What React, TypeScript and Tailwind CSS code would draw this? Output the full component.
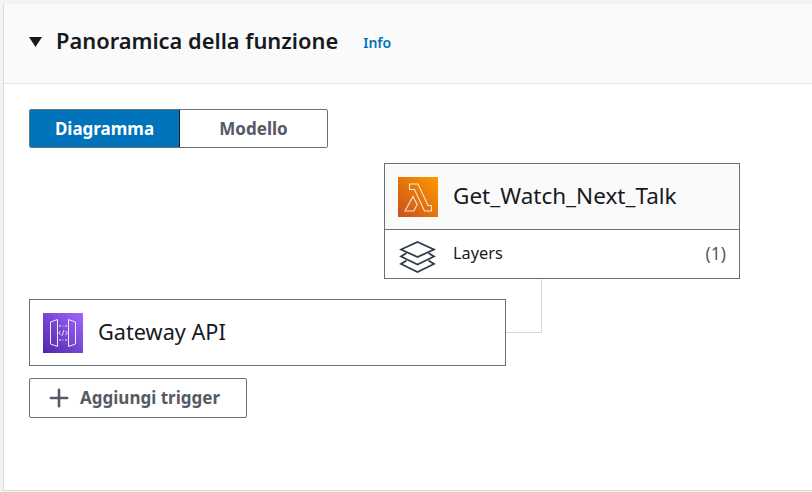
import React from "react";
import { Plus } from "lucide-react";

const LambdaIcon = () => (
    <svg width="40" height="40" viewBox="0 0 40 40" className="block shrink-0">
        <defs>
            <linearGradient id="lambdaBg" x1="0" y1="1" x2="1" y2="0">
                <stop offset="0" stopColor="#c8511b" />
                <stop offset="1" stopColor="#ff9900" />
            </linearGradient>
        </defs>
        <rect width="40" height="40" fill="url(#lambdaBg)" />
        <path d="M11.500 7h8.500l10 21.500h3.500V34h-7L16.500 12.500h-5zM15 19.500l4.200 8-3.400 6.500H7z" fill="none" stroke="#fff" strokeWidth="1.100" opacity="0.8" />
    </svg>
);

const ApiIcon = () => (
    <svg width="40" height="40" viewBox="0 0 40 40" className="block shrink-0">
        <defs>
            <linearGradient id="apiBg" x1="0" y1="1" x2="1" y2="0">
                <stop offset="0" stopColor="#4d27a8" />
                <stop offset="1" stopColor="#a166ff" />
            </linearGradient>
        </defs>
        <rect width="40" height="40" fill="url(#apiBg)" />
        <g fill="none" stroke="#fff" opacity="0.9">
            <path d="M14.500 6.500v27L7.500 31V9zM25.500 6.500v27l7-2.500V9z" strokeWidth="1" />
            <path d="M16 13h2M19.500 13h1M22 13h2M16 27h2M19.500 27h1M22 27h2" strokeWidth="1" />
            <path d="M17.500 18l-1.800 2 1.800 2M22.500 18l1.800 2-1.800 2M21 17l-2 6" strokeWidth="0.900" />
        </g>
    </svg>
);

const LayersIcon = () => (
    <svg width="38" height="34" viewBox="0 0 38 34" className="block shrink-0 mt-[6px]">
        <g fill="none" stroke="#2f3b4c" strokeWidth="1.800" strokeLinejoin="miter">
            <path d="M18.500 2 35 9.500 18.500 17 2 9.500z" />
            <path d="M7.500 13 2 16.500 18.500 24.500 35 16.500 29.500 13" />
            <path d="M7.500 20.500 2 24 18.500 32 35 24 29.500 20.500" />
        </g>
    </svg>
);

const App = () => {
    return (
        <div className="w-[812px] h-[492px] overflow-hidden bg-[#f2f3f3] pt-[4px] pl-[3px] font-['Noto_Sans','Open_Sans',sans-serif]">
            <div className="h-[487px] bg-white border-l border-b border-[#d5dbdb] flex flex-col">
                <div className="h-[80px] shrink-0 bg-[#fafafa] border-b border-[#e7e9e9] flex items-center pl-[25px] pb-[3px]">
                    <svg width="14" height="10" viewBox="0 0 14 10" className="block">
                        <path d="M0 0h13L6.500 10z" fill="#16191f" />
                    </svg>
                    <h2 className="ml-[13px] -mt-[2px] text-[21.85px] leading-[28px] font-semibold text-[#16191f]">Panoramica della funzione</h2>
                    <a className="ml-[25px] mt-[1px] text-[14px] font-semibold text-[#0073bb]">Info</a>
                </div>
                <div className="relative flex-1">
                    <div className="absolute left-[25px] top-[25px] flex h-[39px] w-[299px] text-[17px] font-bold rounded-[2px] overflow-hidden border border-[#687078]">
                        <div className="w-[150px] bg-[#0073bb] border-r border-[#16191f] text-white flex items-center justify-center">Diagramma</div>
                        <div className="flex-1 bg-white text-[#545b64] flex items-center justify-center">Modello</div>
                    </div>

                    {/* diagram nodes */}
                    <div className="absolute left-[380px] top-[79px] w-[356px] h-[116px] border border-[#687078] flex flex-col bg-white">
                        <div className="h-[66px] bg-[#fafafa] border-b border-[#687078] flex items-center pl-[13px]">
                            <LambdaIcon />
                            <span className="ml-[15px] text-[22.5px] -mt-[1px] text-[#16191f]">Get_Watch_Next_Talk</span>
                        </div>
                        <div className="flex-1 flex items-center pl-[14px] pr-[13px]">
                            <LayersIcon />
                            <span className="ml-[16px] text-[16.300px] text-[#16191f] -mt-[1px]">Layers</span>
                            <span className="ml-auto text-[17.500px] text-[#545b64] -mt-[1px]">(1)</span>
                        </div>
                    </div>

                    <div className="absolute left-[502px] top-[195px] w-[36px] h-[54px] border-r border-b border-[#d5dbdb]" />

                    <div className="absolute left-[25px] top-[215px] w-[477px] h-[67px] border border-[#687078] bg-white flex items-center pl-[13px]">
                        <ApiIcon />
                        <span className="ml-[15px] text-[21.7px] text-[#16191f]">Gateway API</span>
                    </div>

                    <div className="absolute left-[25px] top-[294px] w-[218px] h-[40px] border border-[#687078] rounded-[2px] bg-white flex items-center pl-[15px] text-[#545b64]">
                        <Plus size={28} strokeWidth={2.2} className="shrink-0" />
                        <span className="ml-[7px] text-[17px] font-bold">Aggiungi trigger</span>
                    </div>
                </div>
            </div>
        </div>
    );
};

export default App;
